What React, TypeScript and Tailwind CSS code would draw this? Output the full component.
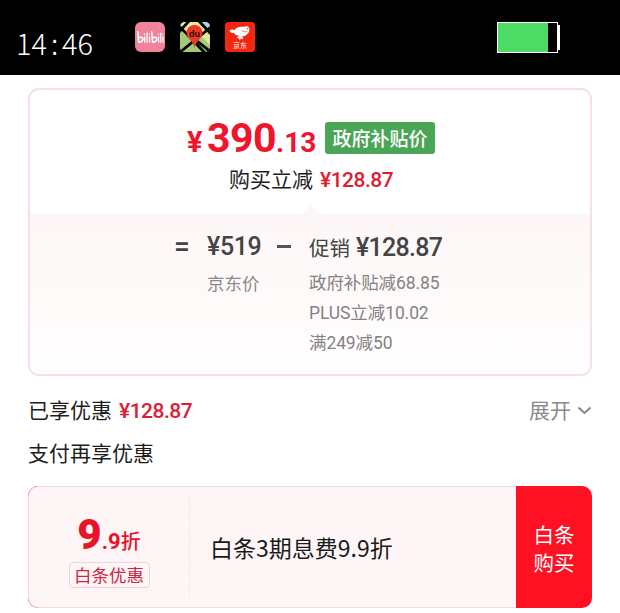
import type { ReactNode } from 'react'
import clsx from 'clsx'

// ── Data ───────────────────────────────────────────────────────────────────

const PROMOTIONS = ['政府补贴减68.85', 'PLUS立减10.02', '满249减50']

// ── Status bar ─────────────────────────────────────────────────────────────

function BilibiliIcon() {
  return (
    <svg className="size-[30px]" viewBox="0 0 30 30" fill="none">
      <rect width="30" height="30" rx="6" fill="#f0829b" />
      <g stroke="#fff" strokeWidth="1.6" strokeLinecap="round">
        <path d="M2.8 9.8 3.7 20.4" />
        <path d="M4 15.6c2.3-1 4.2 0 3.9 1.7-.3 1.7-2 2.8-4.1 3" />
        <path d="M9.7 14.8v5.4M12.1 11v9.2M14.6 14.8v5.4M9.5 12v.3M14.5 12v.3" strokeWidth="1.3" />
        <path d="M16.7 9.8 17.6 20.4" />
        <path d="M17.9 15.6c2.3-1 4.2 0 3.9 1.7-.3 1.7-2 2.8-4.1 3" />
        <path d="M23.6 14.8v5.4M25.8 11v9.2M28 14.8v5.4M23.4 12v.3M27.8 12v.3" strokeWidth="1.2" />
      </g>
    </svg>
  )
}

function MapIcon() {
  return (
    <svg className="size-[30px]" viewBox="0 0 30 30">
      <clipPath id="map-tile">
        <rect width="30" height="30" rx="5" />
      </clipPath>
      <g clipPath="url(#map-tile)">
        <rect width="30" height="30" fill="#a5c977" />
        <path d="M0 0h21L0 19z" fill="#f1e9a0" />
        <path d="M0 7 18 30H0z" fill="#a5c977" />
        <path d="M18 0h12v23L15 8z" fill="#e4e79a" />
        <path d="M21 0h9v9z" fill="#a9d4f0" />
        <path d="M-1 4 25 31M17-3l15 16M-1 31 31 5M-1 10 9-1M17 19l15 12" stroke="#000" strokeWidth="2.8" fill="none" />
        <path d="M14.5 3C9.500 3 6.500 6.800 6.500 11c0 6 6.800 7 8 15.500C15.800 18 22.500 17 22.500 11c0-4.200-3-8-8-8z" fill="#ec3829" />
        <text x="14.500" y="14.500" textAnchor="middle" className="fill-[#2b0b0b] font-['Liberation_Sans'] text-[9px] font-bold">
          du
        </text>
      </g>
    </svg>
  )
}

function JdIcon() {
  return (
    <svg className="size-[30px]" viewBox="0 0 30 30">
      <rect width="30" height="30" rx="3.500" fill="#f3260f" />
      <path
        d="M4.500 8.500c1.500-1.300 3.500-1.200 5-.5 1.800-2.500 5-3.600 8.500-3.200 2 .2 3.500-.8 4.700-.4 1.400.6 2 2.600 1.500 4.500-.8 3.200-3.800 5.200-6.900 5.400l1 3-2.300-.8-1.500 2-.6-2.300-2.300-.3 2.600-2.200c-2.700-.1-4.400-1-5.400-2.700-1.500.3-3.700-.3-4.300-2.500z"
        fill="#fff"
      />
      <circle cx="22.500" cy="6.700" r=".6" fill="#f3260f" />
      <path d="M16.500 8.500c1.700 1.500 4.300 1.500 6.300.3" stroke="#f3260f" strokeWidth=".6" fill="none" />
      <text x="15" y="26.300" textAnchor="middle" className="fill-white font-['Noto_Sans_CJK_SC',sans-serif] text-[7px]">
        京东
      </text>
    </svg>
  )
}

function StatusBar() {
  return (
    <header className="flex h-[75px] bg-black px-4 pt-[22px]">
      <div className="flex h-10 w-[119px] items-center font-['Noto_Sans_CJK_SC',sans-serif] text-[29px] leading-10 font-light text-white">
        <span>14</span>
        <span className="w-[15px] text-center">:</span>
        <span>46</span>
      </div>
      <div className="flex gap-[15px]">
        <BilibiliIcon />
        <MapIcon />
        <JdIcon />
      </div>
      <div className="mr-11 ml-auto flex">
        <div className="h-[31px] w-[61px] border border-white">
          <div className="h-full w-[50px] bg-[#4cdb64]" />
        </div>
        <div className="mt-[3px] h-[25px] w-0.5 bg-white" />
      </div>
    </header>
  )
}

// ── Price card ─────────────────────────────────────────────────────────────

function Num({ className, children }: { className?: string; children: ReactNode }) {
  return <span className={clsx("font-[Roboto,sans-serif]", className)}>{children}</span>
}

function PriceCard() {
  return (
    <section className="h-72 overflow-hidden rounded-[11px] border-2 border-[#f3e1e6]">
      <div className="h-[124px] pt-8">
        <div className="flex h-8 pl-[157px]">
          <div className="flex w-[138px] items-baseline font-[Roboto,sans-serif] leading-8 font-bold text-[#f0142d]">
            <span className="w-5 text-[29px]">¥</span>
            <span className="text-[41px] tracking-[-0.5px]">390</span>
            <span className="text-[28px]">.13</span>
          </div>
          <span className="h-8 w-[110px] rounded-[3px] bg-[#4aa656] text-center text-[19px] leading-8 font-medium text-white">
            政府补贴价
          </span>
        </div>
        <div className="mt-2.5 flex h-7 items-baseline pl-[199px] text-[21px] leading-7">
          <span className="w-[91px]">购买立减</span>
          <Num className="text-[21px] font-medium tracking-[-0.5px] text-[#df1b34]">¥128.87</Num>
        </div>
      </div>

      <div className="relative h-40 bg-linear-to-b from-[#fdf6f6] to-[#fffefe] pt-[17px] pl-[144px]">
        <svg className="absolute -top-[9px] left-[271px] h-[10px] w-5" viewBox="0 0 20 10">
          <path d="M0 10 8 1.500q2-2 4 0L20 10z" fill="#fdf6f6" />
        </svg>
        <div className="flex text-[#444]">
          <Num className="w-[33px] text-[28px] leading-8 font-medium">=</Num>
          <div className="w-[70px]">
            <Num className="block h-8 text-[25px] leading-8 font-medium tracking-[-0.4px]">¥519</Num>
            <span className="mt-[5px] block text-[17.500px] leading-[30px] text-[#8b8889]">京东价</span>
          </div>
          <div className="mt-[14px] h-[3px] w-[14px] bg-[#555]" />
          <div className="ml-[18px]">
            <div className="flex h-8 items-baseline gap-1.500 leading-8">
              <span className="w-[47px] text-[20.500px]">促销</span>
              <Num className="text-[25px] font-medium tracking-[-0.7px]">¥128.87</Num>
            </div>
            <ul className="mt-[5px] font-[Roboto,'Noto_Sans_CJK_SC',sans-serif] text-[17.500px] leading-[30px] tracking-[-0.1px] text-[#858283]">
              {PROMOTIONS.map((item) => (
                <li key={item}>{item}</li>
              ))}
            </ul>
          </div>
        </div>
      </div>
    </section>
  )
}

// ── Coupon ─────────────────────────────────────────────────────────────────

function Coupon() {
  return (
    <section className="flex h-[122px] overflow-hidden rounded-[10px] bg-[#ff1022]">
      <div className="flex w-[488px] rounded-l-[10px] border border-r-0 border-[#efdcdd] bg-[#fef6f6]">
        <div className="my-2.5 flex w-[161px] flex-col items-center border-r border-dashed border-[#f3e4e5] pt-[18px]">
          <div className="flex h-10 items-baseline leading-10 font-bold text-[#e9132a]">
            <Num className="text-[42px] font-black">9</Num>
            <Num className="text-[22px]">.9</Num>
            <span className="text-[20px] font-medium">折</span>
          </div>
          <span className="mt-[7px] h-[26px] w-[81px] rounded border border-[#f3d3d8] text-center text-[17.500px] leading-6 text-[#cf2544]">
            白条优惠
          </span>
        </div>
        <div className="flex items-center pl-5 text-[23px] text-[#1a1a1a]">白条3期息费9.9折</div>
      </div>
      <button className="flex-1 pt-0.5 text-[20.500px] leading-7 text-white">
        白条
        <br />
        购买
      </button>
    </section>
  )
}

// ── Page ───────────────────────────────────────────────────────────────────

export default function App() {
  return (
    <div className="h-[613px] w-[620px] overflow-hidden bg-white font-['Noto_Sans_CJK_SC',sans-serif] text-[#1d1d1d]">
      <StatusBar />
      <main className="px-7 pt-[13px]">
        <PriceCard />
        <div className="mt-[19px] flex h-7 items-baseline text-[21px] leading-7">
          <span className="w-[91px]">已享优惠</span>
          <Num className="text-[21px] font-medium tracking-[-0.5px] text-[#df1b34]">¥128.87</Num>
          <span className="ml-auto flex items-center gap-1.5 text-[#8a8a8a]">
            展开
            <svg className="mt-0.5 h-[9px] w-[15px]" viewBox="0 0 15 9" fill="none">
              <path d="m1.500 1.500 6 5.500 6-5.500" stroke="#858585" strokeWidth="2" />
            </svg>
          </span>
        </div>
        <div className="mt-[15px] h-7 text-[21px] leading-7">支付再享优惠</div>
        <div className="mt-5">
          <Coupon />
        </div>
      </main>
    </div>
  )
}
